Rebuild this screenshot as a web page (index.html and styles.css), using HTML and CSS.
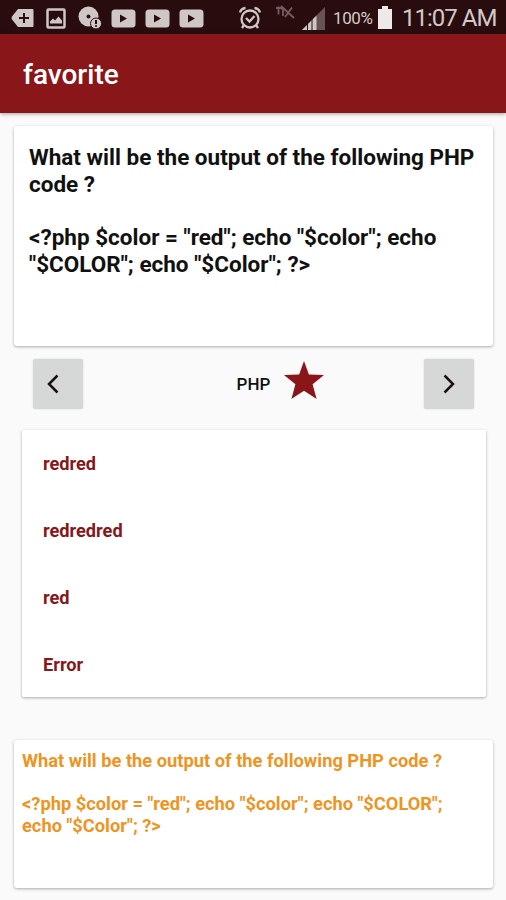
FILE: index.html
```html
<!DOCTYPE html>
<html lang="en">
<head>
    <meta charset="UTF-8">
    <meta name="viewport" content="width=device-width, initial-scale=1.0">
    <title>favorite</title>
    <link rel="stylesheet" href="styles.css">
</head>
<body>
    <div class="status-bar">
        <div class="notifications">
            <svg class="icon-tag" width="24" height="20" viewBox="0 0 24 20">
                <path class="fill" d="M7 1h14.500a1 1 0 0 1 1 1v16a1 1 0 0 1-1 1H7L1 11.500q-1-1.500 0-3z"/>
                <path class="cut" d="M13 5v10M8 10h10"/>
            </svg>
            <svg class="icon-image" width="20" height="21" viewBox="0 0 20 21">
                <rect class="line" x="1.500" y="1.500" width="17" height="18" rx="1" stroke-width="2.500"/>
                <path class="fill" d="M4 15.500v-2l3-3 2 2 3.500-4 3.500 4v3z"/>
            </svg>
            <svg class="icon-disc" width="24" height="24" viewBox="0 0 24 24">
                <circle class="fill" cx="10.500" cy="10.500" r="10"/>
                <circle class="dark" cx="10.500" cy="10.500" r="2"/>
                <circle class="badge" cx="18" cy="17.500" r="5.500"/>
                <path class="cut" d="M18 14v4M18 19.300v1.500"/>
            </svg>
            <svg class="icon-video" width="25" height="19" viewBox="0 0 25 19">
                <rect class="fill" x=".5" y=".5" width="24" height="18" rx="3.500"/>
                <path class="dark" d="M9 5.500l7 4-7 4z"/>
            </svg>
            <svg class="icon-video" width="25" height="19" viewBox="0 0 25 19">
                <rect class="fill" x=".5" y=".5" width="24" height="18" rx="3.500"/>
                <path class="dark" d="M9 5.500l7 4-7 4z"/>
            </svg>
            <svg class="icon-video" width="25" height="19" viewBox="0 0 25 19">
                <rect class="fill" x=".5" y=".5" width="24" height="18" rx="3.500"/>
                <path class="dark" d="M9 5.500l7 4-7 4z"/>
            </svg>
        </div>
        <div class="system">
            <svg class="icon-alarm" width="24" height="24" viewBox="0 0 24 24">
                <circle class="line" cx="12" cy="13" r="8.500" stroke-width="2.300"/>
                <path class="line" d="M8 12l3.500 3.500 5-5.500M2 6.500q1-4 5.500-4.500M22 6.500q-1-4-5.500-4.500M6 19l-2 3M18 19l2 3" stroke-width="2.300"/>
            </svg>
            <svg class="icon-nosync" width="20" height="15" viewBox="0 0 20 15">
                <path class="faint" d="M0 3h5M2.500 1.500v8M7 11V2.500M5 4l2-2M16 2.500L9 12M5 1l13 12"/>
            </svg>
            <svg class="icon-signal" width="24" height="23" viewBox="0 0 24 23">
                <path class="dim" d="M23 0v23H0z"/>
                <path class="fill" d="M14.500 8.500V23H0z"/>
                <path class="gap" d="M5.500 16v7M10 11v12"/>
            </svg>
            <span class="percent">100%</span>
            <svg class="icon-battery" width="16" height="23" viewBox="0 0 16 23">
                <path class="full" d="M5 0h6v3h4v20H1V3h4z"/>
            </svg>
            <span class="time">11:07 AM</span>
        </div>
    </div>

    <div class="header">
        <div class="title">favorite</div>
    </div>

    <div class="main">
        <div class="card question">
            <p>What will be the output of the following PHP code ?</p>
            <p>&lt;?php $color = "red"; echo "$color"; echo "$COLOR"; echo "$Color"; ?&gt;</p>
        </div>

        <div class="controls">
            <button class="nav-btn prev" aria-label="Previous">
                <svg width="12" height="20" viewBox="0 0 12 20"><path d="M10.500 1.500L2 10l8.500 8.500"/></svg>
            </button>
            <div class="category">
                <span>PHP</span>
                <svg class="star" width="40" height="38" viewBox="0 0 40 38">
                    <path d="M20 0l4.900 13.400L40 14 28.600 23.200 32.600 38 20 29.700 7.400 38l4-14.800L0 14l15.100-.6z"/>
                </svg>
            </div>
            <button class="nav-btn next" aria-label="Next">
                <svg width="12" height="20" viewBox="0 0 12 20"><path d="M1.500 1.500L10 10l-8.500 8.500"/></svg>
            </button>
        </div>

        <div class="card answers">
            <div class="answer">redred</div>
            <div class="answer">redredred</div>
            <div class="answer">red</div>
            <div class="answer">Error</div>
        </div>

        <div class="card explanation">
            <p>What will be the output of the following PHP code ?</p>
            <p>&lt;?php $color = "red"; echo "$color"; echo "$COLOR"; echo "$Color"; ?&gt;</p>
        </div>
    </div>
</body>
</html>
```
FILE: styles.css
```css
* { margin: 0; padding: 0; box-sizing: border-box; }

body {
    font-family: Roboto, "Liberation Sans", sans-serif;
    font-weight: bold;
    background: #fafafa;
    color: #111;
    height: 900px;
    overflow: hidden;
}

svg {
    display: block;
    flex-shrink: 0;
}

/* status bar */
.status-bar {
    height: 34px;
    background: #290d0e;
    color: #d2c9c9;
    display: flex;
    justify-content: space-between;
    align-items: center;
    padding: 2px 10px 0 11px;
    font-weight: 400;
}

.notifications, .system {
    display: flex;
    align-items: center;
}

.icon-image { margin-left: 11px; }
.icon-disc { margin-left: 12px; }
.icon-video { margin-left: 9px; }

.fill { fill: #cfc6c6; }
.full { fill: #eee9e9; }
.dark { fill: #290d0e; }
.dim { fill: #685354; }
.line { fill: none; stroke: #cfc6c6; }
.cut { fill: none; stroke: #290d0e; stroke-width: 2; }
.gap { stroke: #290d0e; stroke-width: 1; }
.faint { fill: none; stroke: #735e5f; stroke-width: 1.8; }

.badge {
    fill: #cfc6c6;
    stroke: #290d0e;
    stroke-width: 1;
}

.icon-nosync {
    margin-left: 14px;
    margin-bottom: 11px;
}

.icon-signal { margin-left: 6px; }

.percent {
    font-size: 17px;
    letter-spacing: -0.4px;
    width: 40px;
    margin-left: 7px;
    white-space: nowrap;
}

.icon-battery {
    margin-left: 4px;
    margin-bottom: 2px;
}

.time {
    font-size: 24px;
    letter-spacing: -1px;
    width: 94px;
    margin-left: 9px;
    white-space: nowrap;
}

/* app bar */
.header {
    height: 79px;
    background: #89171a;
    color: #fff;
    display: flex;
    align-items: center;
    padding: 2px 23px 0;
    box-shadow: 0 1px 4px rgba(0, 0, 0, 0.35);
}

.title {
    font-size: 28px;
    font-weight: 500;
}

.main {
    display: flex;
    flex-direction: column;
    padding: 13px 13px 0 14px;
}

.card {
    background: #fff;
    border-radius: 3px;
    box-shadow: 0 1px 3px rgba(0, 0, 0, 0.32);
}

.question {
    height: 220px;
    padding: 18px 15px;
    font-size: 22.5px;
    line-height: 26.8px;
}

.question p + p { margin-top: 26.8px; }

.controls {
    display: flex;
    justify-content: space-between;
    align-items: center;
    margin: 13px 19px 21px;
}

.nav-btn {
    width: 50px;
    height: 50px;
    border: none;
    border-radius: 2px;
    background: #d6d8d7;
    box-shadow: 0 0 2px rgba(0, 0, 0, 0.15);
    display: flex;
    align-items: center;
    justify-content: center;
    cursor: pointer;
}

.nav-btn path {
    fill: none;
    stroke: #1a1012;
    stroke-width: 2.5;
}

.prev { padding-right: 10px; }

.category {
    display: flex;
    align-items: center;
    gap: 14px;
    font-size: 17px;
    font-weight: 500;
    margin-left: 54px;
}

.star {
    fill: #89171a;
    margin-bottom: 9px;
}

.answers {
    margin: 0 7px 0 8px;
    height: 267px;
    border-radius: 2px;
}

.answer {
    height: 67px;
    display: flex;
    align-items: center;
    padding-left: 21px;
    font-size: 18.2px;
    color: #86171a;
}

.explanation {
    margin-top: 43px;
    height: 148px;
    padding: 10px 20px 10px 8px;
    font-size: 18.3px;
    line-height: 21.7px;
    color: #ee941f;
}

.explanation p + p { margin-top: 21.7px; }
```
